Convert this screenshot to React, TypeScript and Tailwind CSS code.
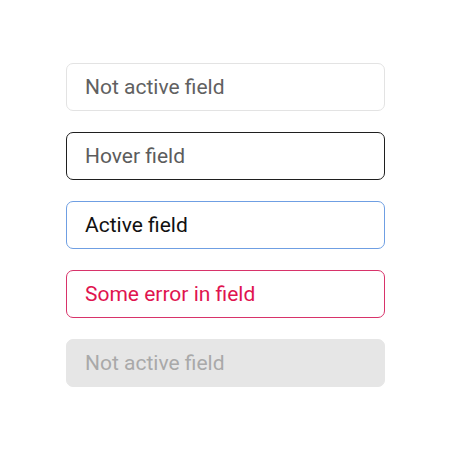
const fields = [
  { label: 'Not active field', box: 'border-[#e3e3e3] bg-white', text: 'text-[#616161]' },
  { label: 'Hover field', box: 'border-[#1f1f1f] bg-white', text: 'text-[#5c5c5c]' },
  { label: 'Active field', box: 'border-[#6f9fe3] bg-white', text: 'text-[#111111]' },
  { label: 'Some error in field', box: 'border-[#d8336a] bg-white', text: 'text-[#e0144f]' },
  { label: 'Not active field', box: 'border-[#e6e6e6] bg-[#e6e6e6]', text: 'text-[#a9a9a9]' },
]

export default function App() {
  return (
    <div className="w-[450px] h-[450px] bg-white pt-[63px] pl-[66px]" style={{ fontFamily: 'Roboto, "Noto Sans", sans-serif' }}>
      <div className="flex flex-col gap-[21px] w-[319px]">
        {fields.map((f, i) => (
          <div
            key={i}
            className={`h-[48px] rounded-[7px] border flex items-center pl-[18px] pt-[2px] text-[21px] ${f.box} ${f.text}`}
          >
            {f.label}
          </div>
        ))}
      </div>
    </div>
  )
}
